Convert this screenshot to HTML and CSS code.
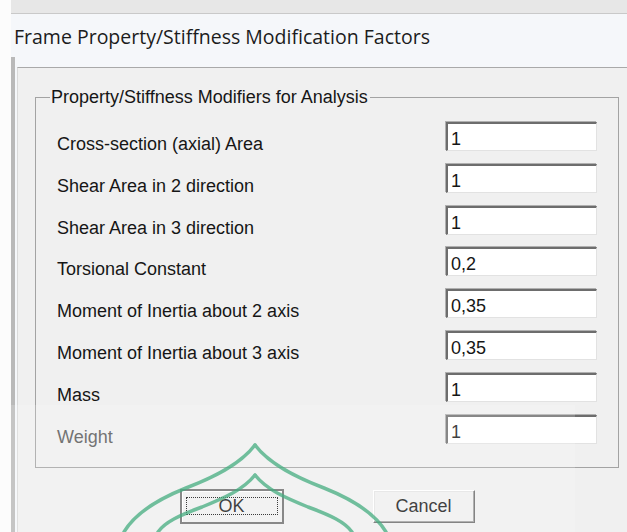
FILE: index.html
```html
<!DOCTYPE html>
<html lang="en">
<head>
<meta charset="utf-8">
<title>Frame Property/Stiffness Modification Factors</title>
<link rel="stylesheet" href="styles.css">
</head>
<body>
<div class="screen">
  <div class="top-strip"></div>
  <div class="titlebar">Frame Property/Stiffness Modification Factors</div>
  <div class="window">
    <div class="panel">
      <fieldset class="group">
        <legend class="group-title">Property/Stiffness Modifiers for Analysis</legend>
        <div class="rows">
          <div class="row"><span class="label">Cross-section (axial) Area</span><input class="field" type="text" value="1"></div>
          <div class="row"><span class="label">Shear Area in 2 direction</span><input class="field" type="text" value="1"></div>
          <div class="row"><span class="label">Shear Area in 3 direction</span><input class="field" type="text" value="1"></div>
          <div class="row"><span class="label">Torsional Constant</span><input class="field" type="text" value="0,2"></div>
          <div class="row"><span class="label">Moment of Inertia about 2 axis</span><input class="field" type="text" value="0,35"></div>
          <div class="row"><span class="label">Moment of Inertia about 3 axis</span><input class="field" type="text" value="0,35"></div>
          <div class="row"><span class="label">Mass</span><input class="field" type="text" value="1"></div>
          <div class="row"><span class="label label-muted">Weight</span><input class="field" type="text" value="1"></div>
        </div>
      </fieldset>
      <div class="actions">
        <button class="btn btn-default" type="button"><span class="focus-ring">OK</span></button>
        <button class="btn" type="button">Cancel</button>
      </div>
    </div>
  </div>

  <!-- watermark stamped over the lower part of the dialog -->
  <svg class="watermark" width="627" height="532" viewBox="0 0 627 532" aria-hidden="true">
    <rect x="0" y="405" width="575" height="127" fill="#ffffff" opacity="0.18"/>
    <g fill="none" stroke="#45ad80" stroke-width="3.5" stroke-linecap="round" opacity="0.75">
      <path d="M255 445 C240 465 212 478 186 488 C156 500 134 515 124 532"/>
      <path d="M255 445 C270 465 298 478 324 488 C354 500 376 515 386 532"/>
      <path d="M255 475 C243 490 224 498 202 507 C180 515 165 522 158 532"/>
      <path d="M255 475 C267 490 286 498 308 507 C330 515 345 522 352 532"/>
    </g>
  </svg>
</div>
</body>
</html>
```
FILE: styles.css
```css
* {
  box-sizing: border-box;
}

html, body {
  margin: 0;
  padding: 0;
  background: #fcfcfc;
}

.screen {
  position: relative;
  width: 627px;
  height: 532px;
  overflow: hidden;
  display: flex;
  flex-direction: column;
  background: #fcfcfc;
  font-family: "Liberation Sans", Arial, sans-serif;
  font-size: 18px;
  color: #161616;
}

/* edge of the window behind */
.top-strip {
  height: 14px;
  margin-left: 11px;
  background: #e7e7e7;
  border-bottom: 1px solid #c9c9c9;
}

.titlebar {
  height: 43px;
  margin-left: 11px;
  padding-left: 3px;
  padding-top: 1px;
  display: flex;
  align-items: center;
  background: #f5f7fa;
  font-family: "Open Sans", "Noto Sans", sans-serif;
  font-size: 19.5px;
  color: #1c1c1c;
}

.window {
  flex: 1;
  margin-left: 11px;
  padding-left: 2px;
  padding-top: 10px;
  border-left: 4px solid #b9b9b9;
  background: #f5f7fa;
  display: flex;
  flex-direction: column;
}

.panel {
  flex: 1;
  background: #f0f0f0;
  border-top: 1px solid #a9a9a9;
  border-left: 1px solid #dadada;
  display: flex;
  flex-direction: column;
}

/* group box */
.group {
  margin: 19px 8px 0 17px;
  padding: 15px 21px 23px 21px;
  border: 1px solid #a3a3a3;
  min-width: 0;
}

.group-title {
  margin-left: -7px;
  padding: 0 2px 0 1px;
  line-height: 20px;
  color: #161616;
}

.rows {
  display: flex;
  flex-direction: column;
  gap: 12.8px;
}

.row {
  height: 29px;
  display: flex;
  justify-content: space-between;
  align-items: flex-start;
}

.label {
  margin-top: 12px;
  line-height: 20px;
  white-space: nowrap;
}

.label-muted {
  color: #555;
}

/* sunken edit box */
.field {
  width: 151px;
  height: 29px;
  margin: 0;
  padding: 5px 3px 0;
  font-family: "Liberation Sans", Arial, sans-serif;
  font-size: 18px;
  line-height: 20px;
  color: #161616;
  background: #fff;
  border-style: solid;
  border-width: 2px 1px 1px 2px;
  border-color: #6d6d6d #e2e2e2 #e2e2e2 #6d6d6d;
  box-shadow: -1px -1px 0 #b0b0b0;
  border-radius: 0;
  outline: none;
}

/* push buttons */
.actions {
  margin: 21px 8px 0 17px;
  display: flex;
  justify-content: center;
  align-items: center;
  gap: 89px;
}

.btn {
  width: 102px;
  height: 33px;
  margin: 0;
  padding: 0;
  display: flex;
  align-items: center;
  justify-content: center;
  font-family: "Liberation Sans", Arial, sans-serif;
  font-size: 18px;
  color: #161616;
  background: #f0f0f0;
  border: 1px solid;
  border-color: #ffffff #6a6a6a #6a6a6a #ffffff;
  box-shadow: inset -1px -1px 0 #a0a0a0, inset 1px 1px 0 #e3e3e3;
  border-radius: 0;
}

.btn-default {
  width: 104px;
  height: 35px;
  border: 2px solid #6e6e6e;
  box-shadow: inset 1px 1px 0 #ffffff;
  align-items: flex-start;
}

.focus-ring {
  width: 92px;
  height: 18px;
  margin-top: 6px;
  border: 1px dotted #111;
  display: flex;
  align-items: center;
  justify-content: center;
  line-height: 16px;
}

.watermark {
  position: absolute;
  left: 0;
  top: 0;
  pointer-events: none;
}
```
